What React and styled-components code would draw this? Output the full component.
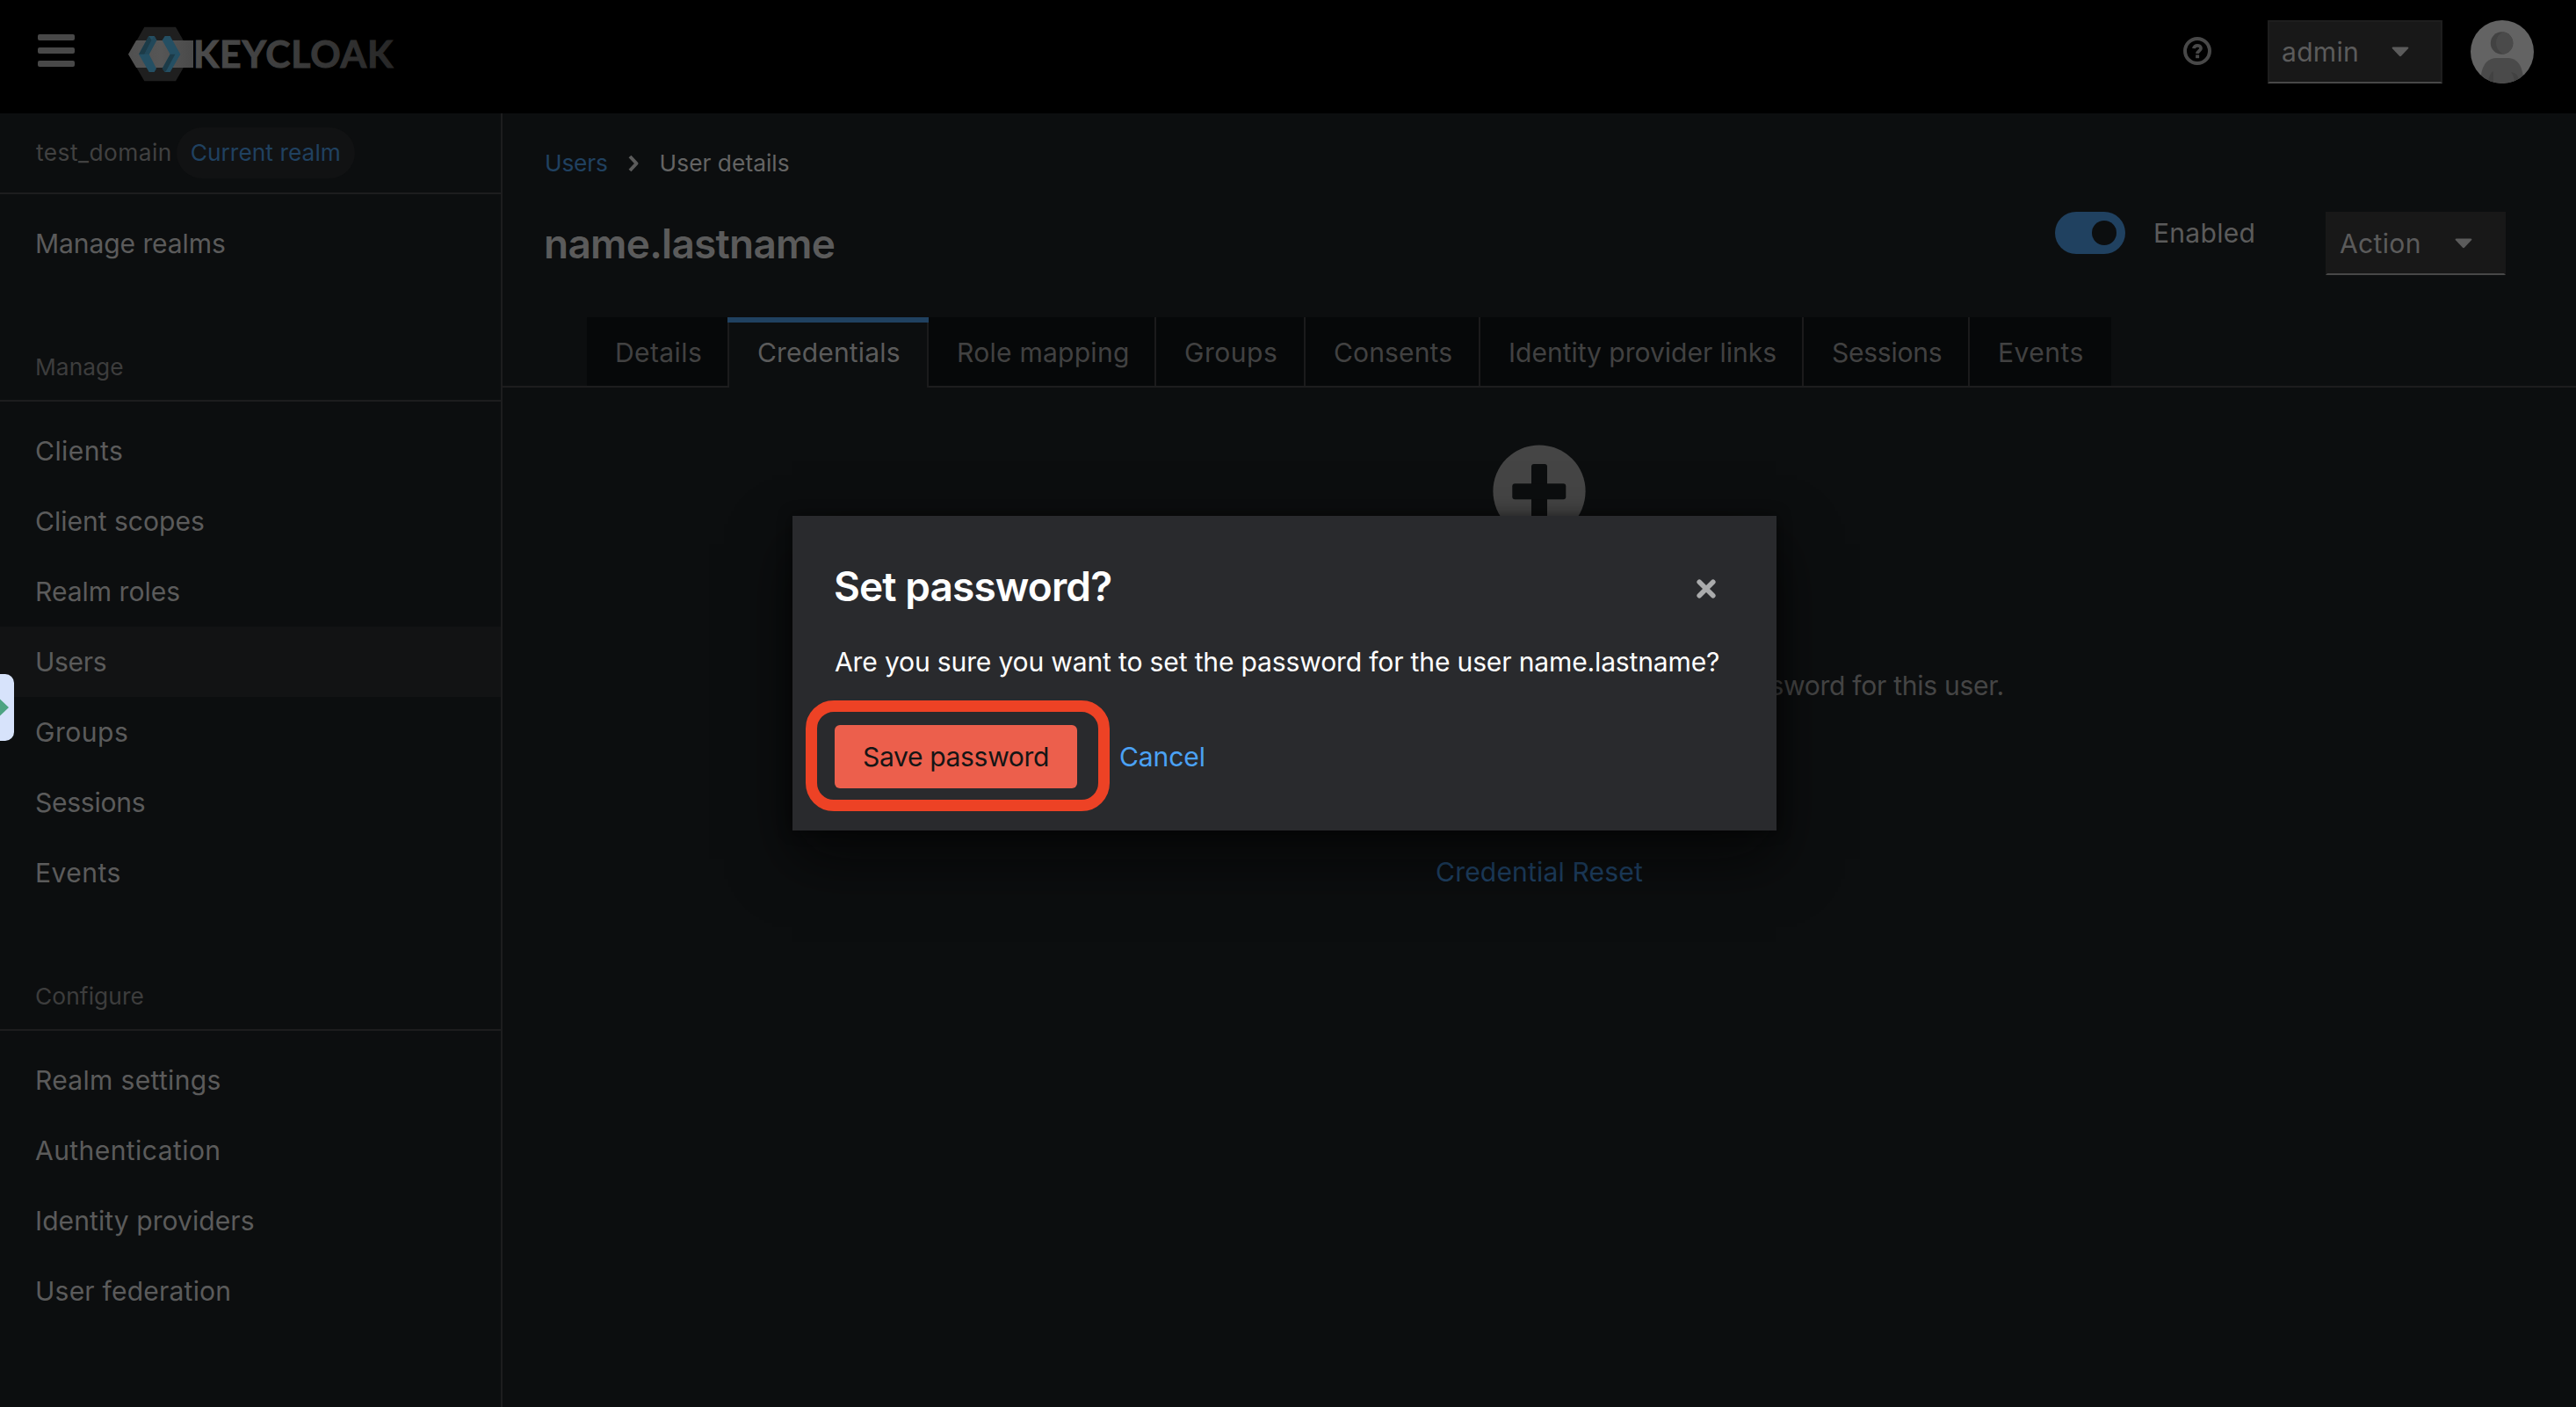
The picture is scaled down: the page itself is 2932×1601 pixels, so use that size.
import React from 'react'
import styled, { createGlobalStyle } from 'styled-components'

const GlobalStyle = createGlobalStyle`
  * {
    box-sizing: border-box;
  }
  body {
    margin: 0;
    background: #0c0e0f;
    font-family: Inter, 'Open Sans', sans-serif;
    font-size: 30.08px;
    line-height: 48px;
    overflow: hidden;
  }
`

const Page = styled.div`
  height: 1601px;
  display: flex;
  flex-direction: column;
  color: #5b5b5b;
`

// letter spacing is set per label, the rest comes from the parent
const Label = styled.span`
  letter-spacing: ${props => props.$track || 0}px;
  white-space: nowrap;
`

/* ---------- header ---------- */

const Header = styled.header`
  height: 129px;
  flex: none;
  display: flex;
  align-items: center;
  padding: 0 48px 11px 43px;
  background: #000;
`

const MenuButton = styled.div`
  width: 42px;
  margin-bottom: 3px;
  display: flex;
  flex-direction: column;
  gap: 8px;
`

const MenuBar = styled.div`
  height: 7px;
  border-radius: 2px;
  background: #484848;
`

const Brand = styled.svg`
  width: 340px;
  height: 100px;
  margin-left: 45px;
  margin-top: 2px;
`

const HelpIcon = styled.svg`
  width: 32px;
  height: 32px;
  margin-left: auto;
  margin-right: 64px;
  margin-bottom: 2px;
`

const Avatar = styled.svg`
  width: 72px;
  height: 72px;
  margin-left: 32px;
`

const Dropdown = styled.div`
  width: ${props => props.$width}px;
  height: 72px;
  display: flex;
  align-items: center;
  justify-content: space-between;
  padding: 0 ${props => props.$right}px 0 14px;
  background: #181818;
  border: 2px solid ${props => props.$edge};
  border-bottom-color: #484848;
`

const CaretIcon = styled.svg`
  width: 20px;
  height: 12px;
  margin-bottom: 1px;
`

/* ---------- sidebar ---------- */

const Body = styled.div`
  flex: 1;
  display: flex;
  min-height: 0;
`

const Sidebar = styled.nav`
  width: 572px;
  flex: none;
  border-right: 2px solid #1d1d1e;
`

const RealmBar = styled.div`
  height: 92px;
  display: flex;
  align-items: center;
  padding-left: 41px;
  margin-bottom: 16px;
  border-bottom: 2px solid #1d1d1e;
  font-size: 26.32px;
  color: #414141;
`

const RealmBadge = styled.div`
  width: 203px;
  height: 58px;
  margin-left: 5px;
  border-radius: 30px;
  display: flex;
  align-items: center;
  justify-content: center;
  background: #111213;
  color: #204160;
`

const NavTitle = styled.div`
  height: 76px;
  margin: 64px 0 16px;
  padding: 13px 0 0 40px;
  border-bottom: 2px solid #1d1d1e;
  font-size: 26.32px;
  color: #3d3d3d;
`

const NavItem = styled.div`
  height: 80px;
  display: flex;
  align-items: center;
  padding-left: 40px;
  background: ${props => props.$active ? '#121314' : 'none'};
`

/* ---------- main ---------- */

const Main = styled.main`
  flex: 1;
  min-width: 0;
`

const Breadcrumb = styled.div`
  display: flex;
  align-items: center;
  padding: 33px 0 0 48px;
  font-size: 26.32px;
  color: #646464;
`

const BreadcrumbLink = styled.span`
  color: #204160;
`

const ChevronIcon = styled.svg`
  width: 14px;
  height: 20px;
  margin: 0 23px 0 22px;
`

const TitleRow = styled.div`
  height: 151px;
  display: flex;
  align-items: flex-start;
  padding: 31px 80px 0 47px;
`

const Title = styled.h1`
  flex: 1;
  margin: 6px 0 0;
  font-size: 46px;
  line-height: 60px;
  font-weight: 600;
`

const Switch = styled.div`
  width: 80px;
  height: 48px;
  margin-right: 32px;
  padding: 10px;
  border-radius: 24px;
  display: flex;
  justify-content: flex-end;
  background: #204160;
`

const Knob = styled.div`
  width: 28px;
  height: 28px;
  border-radius: 50%;
  background: #0c0e0f;
`

const SwitchLabel = styled.div`
  width: 196px;
`

const Tabs = styled.div`
  height: 80px;
  display: flex;
  padding-left: 96px;
  border-bottom: 2px solid #1d1d1e;
`

const Tab = styled.div`
  position: relative;
  width: ${props => props.$width}px;
  height: ${props => props.$active ? 80 : 78}px;
  padding: 16px 0 0 32px;
  background: ${props => props.$active ? '#0c0e0f' : '#060809'};
  color: ${props => props.$active ? '#5b5b5b' : '#414141'};
  border-right: 2px solid #1b1b1c;
  &:last-child {
    border-right: none;
  }
  &::before {
    content: '';
    display: ${props => props.$active ? 'block' : 'none'};
    position: absolute;
    top: 0;
    left: -2px;
    right: -2px;
    height: 6px;
    background: #204160;
  }
`

const EmptyState = styled.div`
  display: flex;
  flex-direction: column;
  align-items: center;
  padding-top: 64px;
  color: #454545;
`

const PlusIcon = styled.svg`
  width: 108px;
  height: 108px;
`

const EmptyText = styled.div`
  margin-top: 143px;
  white-space: nowrap;
`

const EmptyLink = styled.div`
  margin-top: 164px;
  color: #204468;
`

/* ---------- modal ---------- */

const Backdrop = styled.div`
  position: absolute;
  inset: 0;
  display: flex;
  align-items: flex-start;
  justify-content: center;
  padding: 587px 8px 0 0;
`

const Modal = styled.div`
  position: relative;
  width: 1120px;
  height: 358px;
  padding: 50px 48px 48px;
  display: flex;
  flex-direction: column;
  background: #292a2d;
  box-shadow: 0 32px 64px rgba(3, 3, 3, 0.64), 0 0 16px rgba(3, 3, 3, 0.48);
  color: #fff;
`

const ModalHead = styled.div`
  display: flex;
  align-items: center;
  justify-content: space-between;
  padding: 0 20px 0 0;
`

const ModalTitle = styled.h2`
  margin: 0 0 0 -1px;
  font-size: 46px;
  line-height: 60px;
  font-weight: 600;
`

const CloseIcon = styled.svg`
  width: 24px;
  height: 24px;
  margin-top: 6px;
`

const ModalText = styled.div`
  margin-top: 32px;
`

const ModalActions = styled.div`
  margin-top: 48px;
  display: flex;
  align-items: center;
`

const DangerButton = styled.div`
  width: 276px;
  height: 72px;
  border-radius: 6px;
  display: flex;
  align-items: center;
  justify-content: center;
  background: #ec5f4c;
  color: #151515;
`

const LinkButton = styled.div`
  margin-left: 48px;
  color: #4ba2f5;
`

const Highlight = styled.div`
  position: absolute;
  left: 15px;
  top: 210px;
  width: 346px;
  height: 126px;
  border: 13px solid #ed4225;
  border-radius: 32px;
`

const EdgeHandle = styled.div`
  position: absolute;
  left: 0;
  top: 767px;
  width: 16px;
  height: 76px;
  border-radius: 0 10px 10px 0;
  display: flex;
  align-items: center;
  background: #d7e3fb;
`

const HandleArrow = styled.svg`
  width: 10px;
  height: 20px;
`

const manageItems = [
  { text: 'Clients', track: 0.43 },
  { text: 'Client scopes', track: -0.02 },
  { text: 'Realm roles', track: -0.02 },
  { text: 'Users', track: -0.33, active: true },
  { text: 'Groups', track: 0.48 },
  { text: 'Sessions', track: -0.28 },
  { text: 'Events', track: 0.47 },
]

const configureItems = [
  { text: 'Realm settings', track: 0.3 },
  { text: 'Authentication', track: 0.4 },
  { text: 'Identity providers', track: 0.05 },
  { text: 'User federation', track: 0.19 },
]

const tabs = [
  { text: 'Details', width: 162, track: 0.37 },
  { text: 'Credentials', width: 227, track: 0.13, active: true },
  { text: 'Role mapping', width: 259, track: 0.23 },
  { text: 'Groups', width: 170, track: 0.48 },
  { text: 'Consents', width: 199, track: 0.11 },
  { text: 'Identity provider links', width: 368, track: -0.04 },
  { text: 'Sessions', width: 189, track: -0.28 },
  { text: 'Events', width: 161, track: 0.47 },
]

const Caret = () => (
  <CaretIcon viewBox='0 0 20 12'>
    <path d='M2 0.5H18Q20.3 0.8 18.8 2.6L11.2 10.6Q10 11.7 8.8 10.6L1.2 2.6Q-0.3 0.8 2 0.5Z' fill='#5b5b5b' />
  </CaretIcon>
)

const Logo = () => (
  <Brand viewBox='0 0 1020 300'>
    <defs>
      <linearGradient id='band' x1='0' x2='1'>
        <stop offset='0' stopColor='#505050' />
        <stop offset='0.5' stopColor='#565656' />
        <stop offset='1' stopColor='#4a4a4a' />
      </linearGradient>
      <linearGradient id='word' x1='0' x2='1'>
        <stop offset='0' stopColor='#4c4c4c' />
        <stop offset='0.5' stopColor='#3c3c3c' />
        <stop offset='1' stopColor='#272727' />
      </linearGradient>
    </defs>
    <path d='M103 62H210L263 155L210 247H103L50 155Z' fill='#1f1f1f' />
    <path d='M75 108H270V201H75L48 155Z' fill='url(#band)' />
    <path d='M118 93H137L145 107L119 155L144 204L137 216H119L84 155Z' fill='#244f63' />
    <path d='M118 93L128 107L103 155H84Z' fill='#1c3b48' />
    <path d='M128 107L137 93L145 107L119 155H103Z' fill='#22485a' />
    <path d='M173 93H191L226 155L191 216H173L164 204L191 155L164 107Z' fill='#244f63' />
    <path d='M191 155H208L178 211L173 216L164 204Z' fill='#1c3b48' />
    <text
      x='270'
      y='200'
      fontFamily='Lato'
      fontWeight='700'
      fontSize='128'
      textLength='682'
      fill='url(#word)'
      stroke='url(#word)'
      strokeWidth='3'
    >
      KEYCLOAK
    </text>
  </Brand>
)

const Nav = ({ items }) => items.map(item => (
  <NavItem key={item.text} $active={item.active}>
    <Label $track={item.track}>{item.text}</Label>
  </NavItem>
))

const App = () => {
  return (
    <Page>
      <GlobalStyle />
      <Header>
        <MenuButton>
          <MenuBar />
          <MenuBar />
          <MenuBar />
        </MenuButton>
        <Logo />
        <HelpIcon viewBox='0 0 32 32' fill='none' stroke='#484848'>
          <circle cx='16' cy='16' r='14' strokeWidth='4' />
          <path d='M12 13.2C12.2 8.8 20 8.6 20 13C20 15.8 16.1 15.6 16.1 19' strokeWidth='3.8' />
          <path d='M16.1 20.4V24.2' strokeWidth='4' />
        </HelpIcon>
        <Dropdown $width={199} $right={36} $edge='#1e1e1e'>
          <Label $track={0.27}>admin</Label>
          <Caret />
        </Dropdown>
        <Avatar viewBox='0 0 72 72'>
          <defs>
            <clipPath id='face'>
              <circle cx='36' cy='36' r='36' />
            </clipPath>
          </defs>
          <g clipPath='url(#face)'>
            <rect width='72' height='72' fill='#636363' />
            <circle cx='35.6' cy='26' r='12.8' fill='#424242' />
            <path d='M37 13.3A12.8 12.8 0 0 1 37 38.7Q29 34 29 26Q29 17 37 13.3Z' fill='#4a4a4a' />
            <path d='M12 72V62Q15 43 30 43H43Q57 44 59.5 62V72Z' fill='#4a4a4a' />
            <path d='M20 72Q21 60 26 58V72Z' fill='#424242' />
            <path d='M46 59Q54 60 55 68L50 72Q50 64 46 59Z' fill='#424242' />
          </g>
        </Avatar>
      </Header>

      <Body>
        <Sidebar>
          <RealmBar>
            <Label $track={0.45}>test_domain</Label>
            <RealmBadge>
              <Label $track={0.04}>Current realm</Label>
            </RealmBadge>
          </RealmBar>
          <NavItem>
            <Label $track={-0.11}>Manage realms</Label>
          </NavItem>
          <NavTitle>
            <Label $track={0.06}>Manage</Label>
          </NavTitle>
          <Nav items={manageItems} />
          <NavTitle>
            <Label $track={0.09}>Configure</Label>
          </NavTitle>
          <Nav items={configureItems} />
        </Sidebar>

        <Main>
          <Breadcrumb>
            <BreadcrumbLink>
              <Label $track={-0.2}>Users</Label>
            </BreadcrumbLink>
            <ChevronIcon viewBox='0 0 14 20'>
              <path d='M3 2L10.5 10L3 18' fill='none' stroke='#5b5b5b' strokeWidth='4' strokeLinejoin='round' />
            </ChevronIcon>
            <Label $track={0.03}>User details</Label>
          </Breadcrumb>
          <TitleRow>
            <Title>
              <Label $track={-0.75}>name.lastname</Label>
            </Title>
            <Switch>
              <Knob />
            </Switch>
            <SwitchLabel>
              <Label $track={0.25}>Enabled</Label>
            </SwitchLabel>
            <Dropdown $width={205} $right={36} $edge='#181818'>
              <Label $track={0.32}>Action</Label>
              <Caret />
            </Dropdown>
          </TitleRow>
          <Tabs>
            {tabs.map(tab => (
              <Tab key={tab.text} $width={tab.width} $active={tab.active}>
                <Label $track={tab.track}>{tab.text}</Label>
              </Tab>
            ))}
          </Tabs>
          <EmptyState>
            <PlusIcon viewBox='0 0 108 108'>
              <circle cx='54' cy='54' r='52.6' fill='#454545' />
              <rect x='45' y='23' width='18' height='62' rx='3' fill='#0c0e0f' />
              <rect x='23.3' y='45.3' width='61' height='18' rx='3' fill='#0c0e0f' />
            </PlusIcon>
            <EmptyText>
              <Label $track={-0.3}>This user does not have any credentials. You can set password for this user.</Label>
            </EmptyText>
            <EmptyLink>
              <Label $track={0.15}>Credential Reset</Label>
            </EmptyLink>
          </EmptyState>
        </Main>
      </Body>

      <Backdrop>
        <Modal>
          <ModalHead>
            <ModalTitle>
              <Label $track={-0.9}>Set password?</Label>
            </ModalTitle>
            <CloseIcon viewBox='0 0 24 24'>
              <path d='M4.2 4.2L19.8 19.8M19.8 4.2L4.2 19.8' stroke='#aaabac' strokeWidth='5.6' strokeLinecap='round' />
            </CloseIcon>
          </ModalHead>
          <ModalText>
            <Label $track={-0.17}>Are you sure you want to set the password for the user name.lastname?</Label>
          </ModalText>
          <ModalActions>
            <DangerButton>
              <Label $track={-0.36}>Save password</Label>
            </DangerButton>
            <LinkButton>
              <Label $track={-0.13}>Cancel</Label>
            </LinkButton>
          </ModalActions>
          <Highlight />
        </Modal>
      </Backdrop>

      <EdgeHandle>
        <HandleArrow viewBox='0 0 10 20'>
          <path d='M0 0.5L10 10L0 19.5Z' fill='#4da482' />
        </HandleArrow>
      </EdgeHandle>
    </Page>
  )
}

export default App
